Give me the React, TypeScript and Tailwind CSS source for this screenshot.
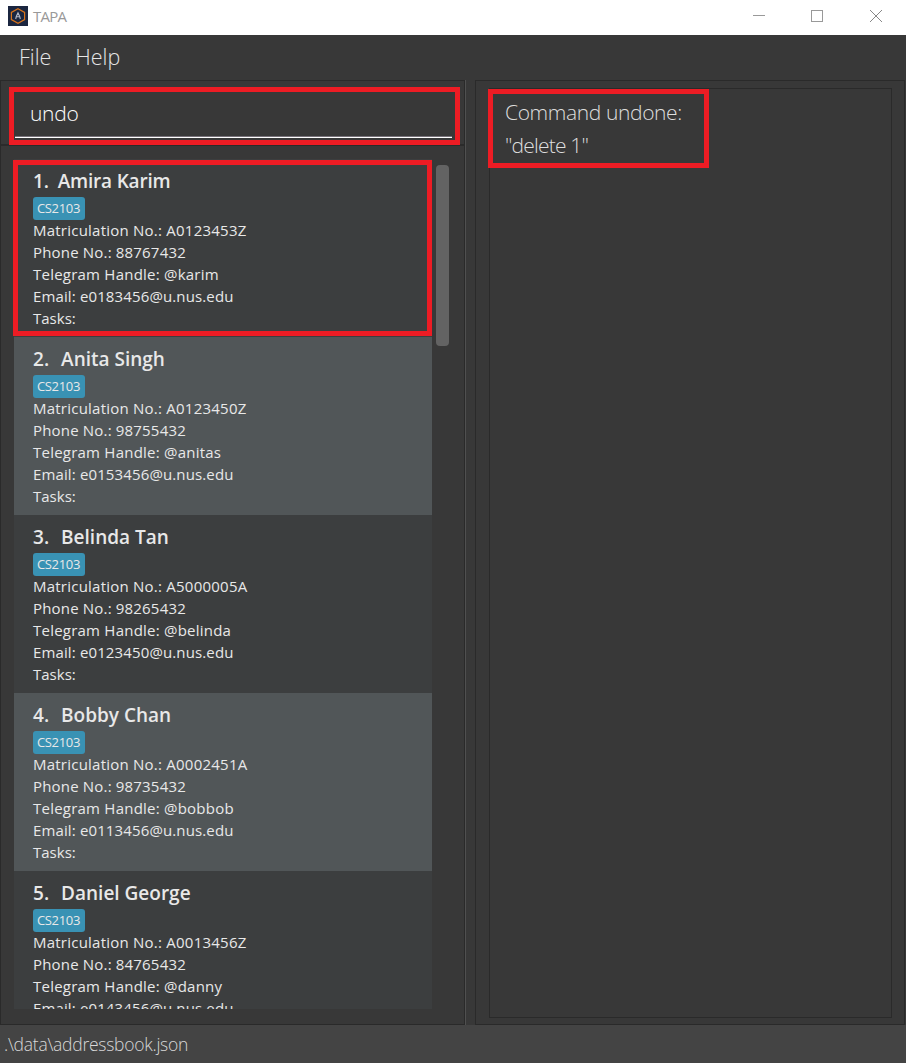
const people = [
  { name: "Amira Karim", id: "A0123453Z", phone: "88767432", handle: "@karim", email: "e0183456@u.nus.edu" },
  { name: "Anita Singh", id: "A0123450Z", phone: "98755432", handle: "@anitas", email: "e0153456@u.nus.edu" },
  { name: "Belinda Tan", id: "A5000005A", phone: "98265432", handle: "@belinda", email: "e0123450@u.nus.edu" },
  { name: "Bobby Chan", id: "A0002451A", phone: "98735432", handle: "@bobbob", email: "e0113456@u.nus.edu" },
  { name: "Daniel George", id: "A0013456Z", phone: "84765432", handle: "@danny", email: "e0143456@u.nus.edu" },
];

// Rows whose last line scrolls out of the viewport skip it.
const fullyVisibleRows = 4;

type Person = (typeof people)[number];

function TitleBar() {
  return (
    <header className="flex h-[35px] items-center bg-white pl-2 text-[#999999]">
      <svg width="20" height="20" viewBox="0 0 20 20" className="-mt-[3px] shrink-0">
        <rect width="20" height="20" fill="#1b2640" />
        <path d="M10 2.8 16.6 6.4v7.2L10 17.2 3.4 13.6V6.4Z" fill="none" stroke="#d9741c" strokeWidth="1.2" />
        <path d="M7.7 13 8.3 10.5 10 6.8 11.7 10.5 12.3 13M8.4 10.8h3.2" fill="none" stroke="#b4bac8" strokeWidth="1.1" />
      </svg>
      <span className="-mt-[2px] ml-[5px] text-[15px] tracking-[-0.75px]">TAPA</span>
      <div className="-mt-[3px] ml-auto flex pr-[24px]">
        <svg width="12" height="12" viewBox="0 0 12 12" className="mr-[46px]" shapeRendering="crispEdges">
          <path d="M0 5.5h12" stroke="#999" />
        </svg>
        <svg width="12" height="12" viewBox="0 0 12 12" className="mr-[47px]" shapeRendering="crispEdges">
          <rect x="0.5" y="0.5" width="11" height="11" fill="none" stroke="#999" />
        </svg>
        <svg width="12" height="12" viewBox="0 0 12 12">
          <path d="M0 0 12 12M12 0 0 12" stroke="#888" />
        </svg>
      </div>
    </header>
  );
}

function PersonCard({ person, index }: { person: Person; index: number }) {
  const spacing = index === 0 ? "gap-[9px] tracking-[-0.2px]" : "gap-3";
  return (
    <li className="h-[178px] pt-[9px] pl-[19px] text-[#e8e8e8] odd:bg-[#3c3e3f] even:bg-[#515658]">
      <h2 className={`flex h-[27px] text-[19px] leading-[27px] font-semibold whitespace-nowrap ${spacing}`}>
        <span>{index + 1}.</span>
        <span>{person.name}</span>
      </h2>
      <div className="mt-[2px] flex h-[23px] w-[52px] items-center justify-center rounded-[3px] bg-[#3992b4] pr-px text-[13px] font-medium tracking-[-0.3px]">
        CS2103
      </div>
      <div className="-mt-px text-[15px] leading-[22px] whitespace-nowrap">
        <p className="tracking-[0.23px]">Matriculation No.: {person.id}</p>
        <p className="tracking-[0.18px]">Phone No.: {person.phone}</p>
        <p className="tracking-[0.23px]">Telegram Handle: {person.handle}</p>
        <p className="tracking-[0.13px]">Email: {person.email}</p>
        {index < fullyVisibleRows && <p>Tasks:</p>}
      </div>
    </li>
  );
}

export default function App() {
  return (
    <div className="flex h-[1063px] w-[906px] flex-col overflow-hidden bg-[#383838] font-['Open_Sans','Noto_Sans',sans-serif]">
      <TitleBar />
      <nav className="flex h-[45px] gap-[24px] pl-[19px] text-[21.5px] leading-[44px] font-light text-[#e6e6e6]">
        <span>File</span>
        <span>Help</span>
      </nav>
      <main className="flex h-[945px]">
        <div className="flex w-[465px] flex-col border border-[#2a2a2a]">
          <section className="relative h-[65px] shrink-0 border-b-2 border-[#2b2b2b] pt-4 pl-[29px]">
            <p className="text-[21px] leading-[32px] font-light tracking-[-0.3px] text-white">undo</p>
            <div className="absolute top-[6px] left-[8px] h-[58px] w-[451px] border-5 border-[#ed1c24] px-px">
              <div className="mt-[44px] h-[2px] w-[437px] border-t border-[#77727a] bg-white" />
            </div>
          </section>
          <section className="relative flex pt-[13px] pl-[13px]">
            <ul className="h-[850px] w-[418px] overflow-hidden">
              {people.map((person, index) => (
                <PersonCard key={person.name} person={person} index={index} />
              ))}
            </ul>
            <div className="mt-[6px] ml-[4px] h-[181px] w-[13px] rounded-[4px] bg-[#636363]" />
            <div className="absolute top-[14px] left-[12px] h-[176px] w-[419px] border-5 border-[#ed1c24]" />
          </section>
        </div>
        <div className="w-[10px] border-l border-[#505050]" />
        <section className="h-[945px] w-[430px] border border-[#2a2a2a] pt-[7px] pl-[13px]">
          <div className="relative h-[930px] w-[403px] border border-[#2a2a2a] pt-[7px] pl-[15px] text-[21px] leading-[33px] font-light text-[#dedede]">
            <p className="tracking-[-0.37px]">Command undone:</p>
            <p className="tracking-[-0.8px]">"delete 1"</p>
            <div className="absolute top-0 -left-[2px] h-[79px] w-[221px] border-5 border-[#ed1c24]" />
          </div>
        </section>
      </main>
      <footer className="h-[38px] bg-[#444444] pl-[4px] text-[17.5px] leading-[39px] font-light tracking-[-0.26px] text-[#d8d8d8]">
        {".\\data\\addressbook.json"}
      </footer>
    </div>
  );
}
